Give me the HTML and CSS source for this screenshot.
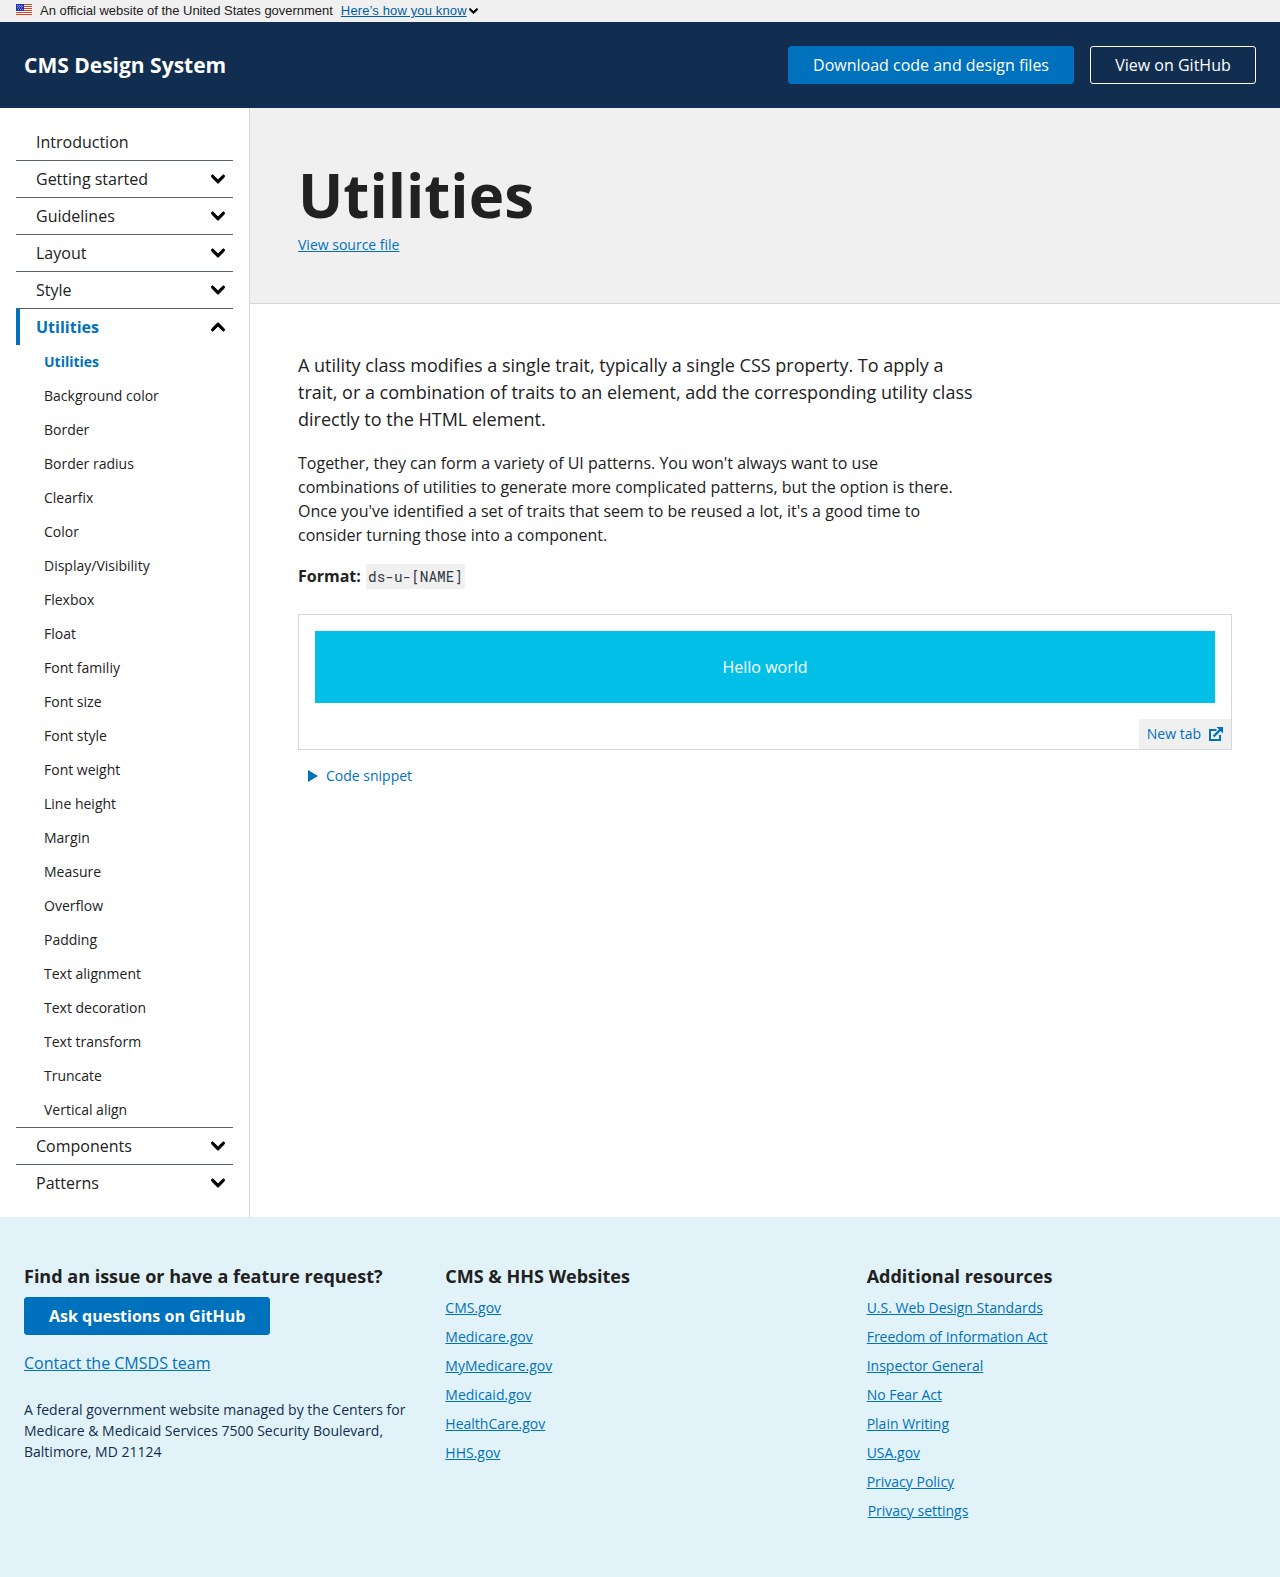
FILE: index.html
```html
<!DOCTYPE html>
<html lang="en">
<head>
<meta charset="utf-8">
<title>Utilities - CMS Design System</title>
<link rel="stylesheet" href="styles.css">
</head>
<body>
<svg class="defs" width="0" height="0" aria-hidden="true">
  <symbol id="chevron" viewBox="0 0 448 512"><path d="M207.029 381.476L12.686 187.132c-9.373-9.373-9.373-24.569 0-33.941l22.667-22.667c9.357-9.357 24.522-9.375 33.901-.04L224 284.505l154.745-154.021c9.379-9.335 24.544-9.317 33.901.04l22.667 22.667c9.373 9.373 9.373 24.569 0 33.941L240.971 381.476c-9.373 9.372-24.569 9.372-33.942 0z"/></symbol>
</svg>
<div class="banner">
  <svg class="flag" viewBox="0 0 16 11" width="16" height="11" shape-rendering="crispEdges">
    <path fill="#fff" d="M0 0h16v11H0z"/>
    <path fill="#db3e1f" d="M8 0h8v1H8zM8 2h8v1H8zM8 4h8v1H8zM8 6h8v1H8zM0 8h16v1H0zM0 10h16v1H0z"/>
    <path fill="#1e33b1" d="M0 0h8v7H0z"/>
    <path fill="#fff" shape-rendering="auto" d="M1 1h.7v.7H1zM3 1h.7v.7H3zM5 1h.7v.7H5zM2 2.3h.7V3H2zM4 2.3h.7V3H4zM6 2.3h.7V3H6zM1 3.6h.7v.7H1zM3 3.6h.7v.7H3zM5 3.6h.7v.7H5zM2 5h.7v.7H2zM4 5h.7v.7H4zM6 5h.7v.7H6z"/>
  </svg>
  <span class="banner-text">An official website of the United States government</span>
  <a class="banner-link" href="#">Here’s how you know</a>
  <svg class="banner-chevron"><use href="#chevron"/></svg>
</div>
<header class="header">
  <span class="brand">CMS Design System</span>
  <nav class="actions">
    <a class="button button-primary" href="#">Download code and design files</a>
    <a class="button button-ghost" href="#">View on GitHub</a>
  </nav>
</header>
<div class="layout">
  <nav class="sidebar">
    <ul class="nav">
      <li><a href="#">Introduction</a></li>
      <li><a href="#">Getting started<svg><use href="#chevron"/></svg></a></li>
      <li><a href="#">Guidelines<svg><use href="#chevron"/></svg></a></li>
      <li><a href="#">Layout<svg><use href="#chevron"/></svg></a></li>
      <li><a href="#">Style<svg><use href="#chevron"/></svg></a></li>
      <li><a class="current" href="#">Utilities<svg class="up"><use href="#chevron"/></svg></a>
        <ul class="subnav">
          <li class="active">Utilities</li>
          <li>Background color</li>
          <li>Border</li>
          <li>Border radius</li>
          <li>Clearfix</li>
          <li>Color</li>
          <li>Display/Visibility</li>
          <li>Flexbox</li>
          <li>Float</li>
          <li>Font familiy</li>
          <li>Font size</li>
          <li>Font style</li>
          <li>Font weight</li>
          <li>Line height</li>
          <li>Margin</li>
          <li>Measure</li>
          <li>Overflow</li>
          <li>Padding</li>
          <li>Text alignment</li>
          <li>Text decoration</li>
          <li>Text transform</li>
          <li>Truncate</li>
          <li>Vertical align</li>
        </ul>
      </li>
      <li><a href="#">Components<svg><use href="#chevron"/></svg></a></li>
      <li><a href="#">Patterns<svg><use href="#chevron"/></svg></a></li>
    </ul>
  </nav>
  <main class="main">
    <div class="hero">
      <h1>Utilities</h1>
      <a href="#">View source file</a>
    </div>
    <div class="content">
      <p class="lead">A utility class modifies a single trait, typically a single CSS property. To apply a trait, or a combination of traits to an element, add the corresponding utility class directly to the HTML element.</p>
      <p>Together, they can form a variety of UI patterns. You won't always want to use combinations of utilities to generate more complicated patterns, but the option is there. Once you've identified a set of traits that seem to be reused a lot, it's a good time to consider turning those into a component.</p>
      <p class="format"><strong>Format:</strong> <code>ds-u-[NAME]</code></p>
      <div class="example">
        <div class="hello">Hello world</div>
        <a class="newtab" href="#">New tab
          <svg viewBox="0 0 14 14" width="14" height="14" fill="none" stroke="currentColor"><path stroke-width="2" d="M7.5 3H1v10h10V8"/><path stroke-width="2.4" d="M4.5 9.5l7-7"/><path fill="currentColor" stroke="none" d="M7.5 0H14v6.5z"/></svg>
        </a>
      </div>
      <div class="snippet"><svg viewBox="0 0 10 12" width="10" height="12"><path fill="currentColor" d="M0 0l10 6-10 6z"/></svg>Code snippet</div>
    </div>
  </main>
</div>
<footer class="footer">
  <section>
    <h2>Find an issue or have a feature request?</h2>
    <a class="button button-primary button-bold" href="#">Ask questions on GitHub</a>
    <p class="contact"><a href="#">Contact the CMSDS team</a></p>
    <p class="address">A federal government website managed by the Centers for Medicare &amp; Medicaid Services 7500 Security Boulevard, Baltimore, MD 21124</p>
  </section>
  <section>
    <h2>CMS &amp; HHS Websites</h2>
    <ul class="links">
      <li><a href="#">CMS.gov</a></li>
      <li><a href="#">Medicare.gov</a></li>
      <li><a href="#">MyMedicare.gov</a></li>
      <li><a href="#">Medicaid.gov</a></li>
      <li><a href="#">HealthCare.gov</a></li>
      <li><a href="#">HHS.gov</a></li>
    </ul>
  </section>
  <section>
    <h2>Additional resources</h2>
    <ul class="links">
      <li><a href="#">U.S. Web Design Standards</a></li>
      <li><a href="#">Freedom of Information Act</a></li>
      <li><a href="#">Inspector General</a></li>
      <li><a href="#">No Fear Act</a></li>
      <li><a href="#">Plain Writing</a></li>
      <li><a href="#">USA.gov</a></li>
      <li><a href="#">Privacy Policy</a></li>
      <li class="settings"><a href="#">Privacy settings</a></li>
    </ul>
  </section>
</footer>
</body>
</html>
```
FILE: styles.css
```css
* { box-sizing: border-box; }
body {
  margin: 0;
  font: 16px/24px "Open Sans", sans-serif;
  color: #212121;
  background: #fff;
}
h1, h2, p, ul { margin: 0; padding: 0; }
ul { list-style: none; }
a { color: #0071bc; }
.defs { display: block; height: 0; }

.banner {
  display: flex;
  align-items: center;
  height: 22px;
  padding: 0 16px;
  background: #f0f0f0;
  font: 13px/20px "Liberation Sans", Arial, sans-serif;
  color: #212121;
}
.flag { margin: -3px 8px 0 0; }
.banner-text { margin-right: 8px; letter-spacing: -0.02px; }
.banner-link { color: #005ea2; letter-spacing: 0.13px; }
.banner-chevron { width: 9px; height: 10px; margin-left: 2px; fill: #000; stroke: #000; stroke-width: 40px; overflow: visible; }

.header {
  display: flex;
  align-items: center;
  justify-content: space-between;
  height: 86px;
  padding: 0 24px;
  background: #112e51;
}
.brand { font-size: 21px; font-weight: 700; color: #fff; }
.actions { display: flex; gap: 16px; }
.button {
  display: inline-block;
  height: 38px;
  padding: 6px 24px;
  border: 1px solid transparent;
  border-radius: 3px;
  color: #fff;
  text-decoration: none;
}
.button-primary { background: #0071bc; border-color: #0071bc; }
.button-ghost { min-width: 166px; border-color: #fff; text-align: center; }
.button-bold { font-weight: 700; }

.layout { display: flex; height: 1109px; }
.sidebar {
  flex: 0 0 250px;
  padding: 16px;
  border-right: 1px solid #d6d7d9;
}
.nav > li + li { border-top: 1px solid #5b616b; }
.nav > li > a {
  display: flex;
  align-items: center;
  justify-content: space-between;
  height: 36px;
  padding: 0 8px 0 20px;
  color: #212121;
  text-decoration: none;
}
.nav svg { width: 14px; height: 16px; fill: #000; stroke: #000; stroke-width: 32px; overflow: visible; }
.nav .up { transform: rotate(180deg); }
.nav > li > .current {
  padding-left: 16px;
  border-left: 4px solid #0071bc;
  color: #0071bc;
  font-weight: 700;
}
.subnav { padding-left: 28px; font-size: 14px; }
.subnav li { height: 34px; line-height: 34px; }
.subnav .active { color: #0071bc; font-weight: 700; }

.main { flex: 1; }
.hero {
  height: 196px;
  padding: 48px;
  background: #f0f0f0;
  border-bottom: 1px solid #d6d7d9;
}
.hero h1 { font-size: 60px; line-height: 78px; font-weight: 700; }
.hero a { display: block; font-size: 14px; line-height: 21px; }
.content { padding: 48px; }
.content p { max-width: 680px; margin-bottom: 18px; }
.content .lead { font-size: 18px; line-height: 27px; }
.content .format { height: 24px; margin-top: -1px; }
code {
  margin-left: 1px;
  padding: 3px 2px;
  background: #f0f0f0;
  color: #323a45;
  font: 14.4px/24px "Roboto Mono", "DejaVu Sans Mono", monospace;
}
.example {
  display: flex;
  flex-direction: column;
  margin-top: 26px;
  padding: 16px 0 0;
  border: 1px solid #d6d7d9;
}
.hello {
  margin: 0 16px 16px;
  padding: 24px;
  background: #02bfe7;
  color: #fff;
  text-align: center;
}
.newtab {
  display: flex;
  align-items: center;
  align-self: flex-end;
  gap: 8px;
  height: 30px;
  padding: 0 8px;
  background: #f0f0f0;
  font-size: 14px;
  text-decoration: none;
}
.snippet {
  display: flex;
  align-items: center;
  gap: 8px;
  margin-top: 14px;
  padding-left: 10px;
  color: #0071bc;
  font-size: 14px;
}

.footer {
  display: grid;
  grid-template-columns: repeat(3, 1fr);
  gap: 32px;
  height: 360px;
  padding: 47px 24px;
  background: #e1f3f8;
}
.footer h2 { margin-bottom: 9px; font-size: 18px; line-height: 24px; font-weight: 700; }
.contact { margin-top: 16px; }
.address { margin-top: 24px; font-size: 14px; line-height: 21px; color: #112e51; }
.links { font-size: 14px; line-height: 21px; }
.links li { margin-bottom: 8px; }
.settings { padding-left: 1px; }
```
